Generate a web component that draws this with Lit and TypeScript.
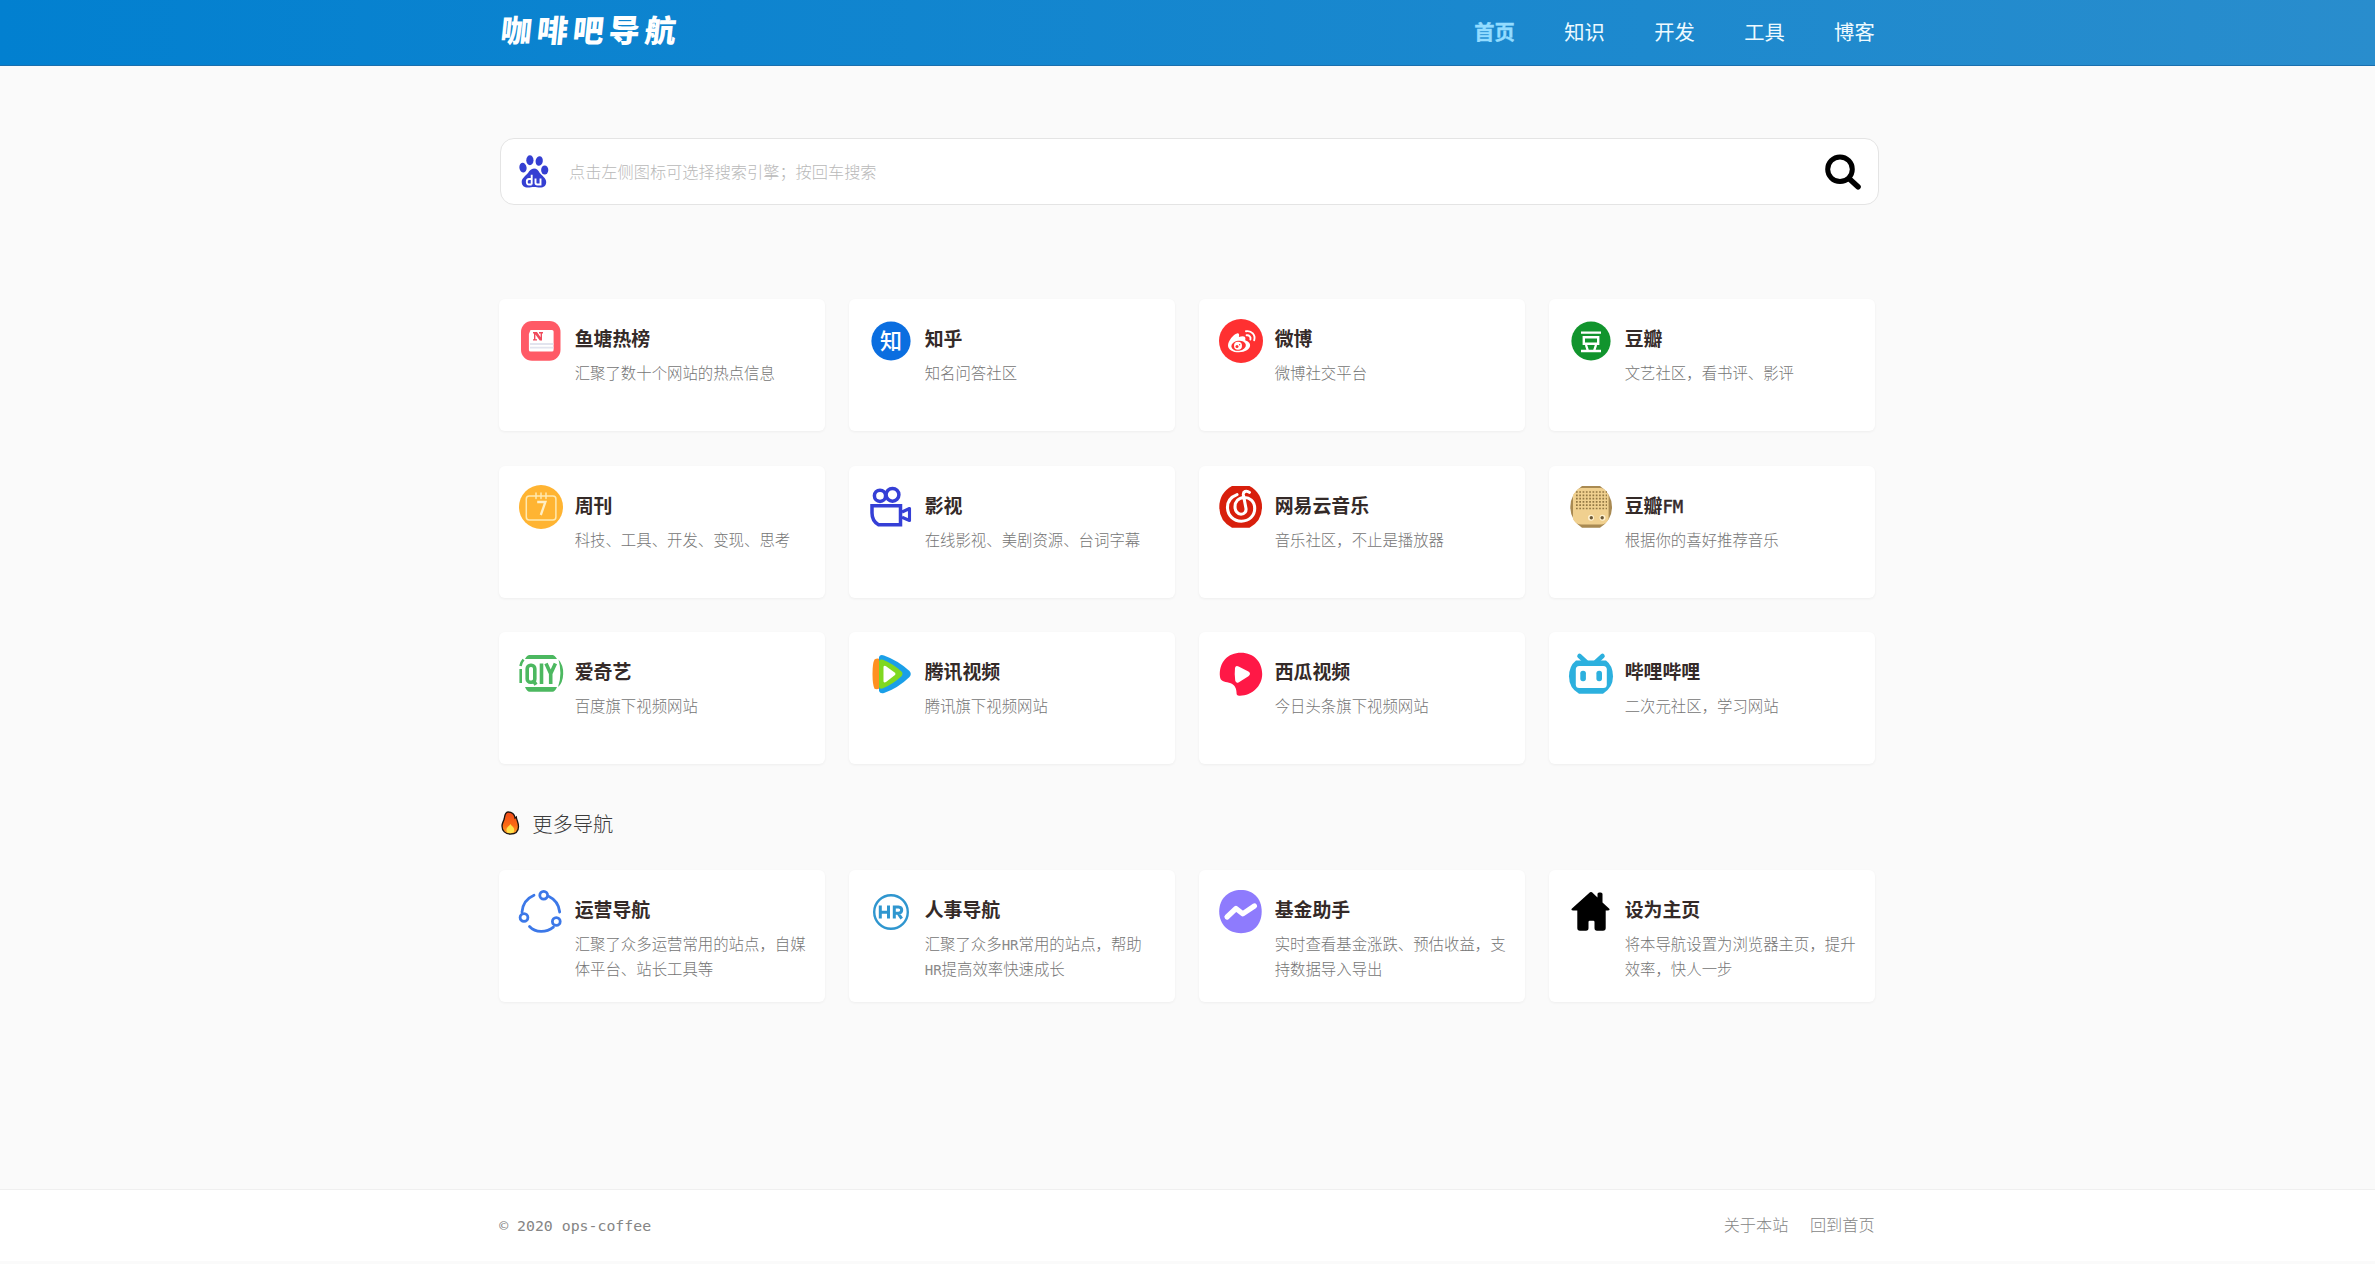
import { LitElement, html, css, svg, TemplateResult, SVGTemplateResult } from "lit";
import { customElement, property } from "lit/decorators.js";

interface Site {
  icon: string;
  name: string;
  latin?: string;
  desc: (string | { en: string })[];
}

const ICONS: Record<string, SVGTemplateResult> = {
  fish: svg`<rect x="2" y="2" width="39.5" height="39.8" rx="11" fill="#ff5a66"/>
    <path d="M11.5 11H33a1.6 1.6 0 0 1 1.6 1.6V31a1.6 1.6 0 0 1-1.6 1.6H11.5A1.6 1.6 0 0 1 9.9 31V15z" fill="#fff"/>
    <path d="M11 25h23.4M11 28.6h23.4" stroke="#e2e4ee" stroke-width="1.8"/>
    <path d="M14 13h4l3.6 5.2V14.4H20V13h4v1.4h-1v7.2h-2.2l-4.4-6v4.6H18v1.4h-4v-1.4h1v-5.8h-1z" fill="#f04a5c"/>`,
  zhihu: svg`<circle cx="22" cy="22" r="19.6" fill="#0a6ee0"/>
    <text x="22" y="30" text-anchor="middle" font-size="22" font-weight="500" fill="#fff">知</text>`,
  weibo: svg`<circle cx="22" cy="22" r="22" fill="#ff3031"/>
    <path d="M18 14.4c2-.4 2.600 1 1.900 3.600 3.500-1.400 6.600-1.200 6.500 1.600 0 .8-.3 1.400-.1 1.700.4.5 4.800 1.300 4.800 5 0 3.900-5 7-11.200 7-6.100 0-10.900-2.800-10.900-6.900 0-4.500 5.500-11.200 9-12z" fill="#fff"/>
    <ellipse cx="19.600" cy="26.700" rx="7.300" ry="5" fill="#ff3031" transform="rotate(-8 19.600 26.700)"/>
    <circle cx="19" cy="26.800" r="4" fill="#fff"/><circle cx="18" cy="27.600" r="1.500" fill="#ff3031"/>
    <circle cx="20.600" cy="25.800" r=".7" fill="#ff3031"/>
    <path d="M27 12.300c5.500-1 9.800 3.700 8.200 9M27.600 16.300c2.700-.4 4.500 1.800 3.800 4.200" fill="none" stroke="#fff" stroke-width="1.900" stroke-linecap="round"/>`,
  douban: svg`<circle cx="22" cy="22" r="19.6" fill="#11942d"/>
    <path d="M12 13.600h20M14.800 18.200h14.400v6.600H14.800zM17 26l1.800 5.500M27 26l-1.800 5.500M12 32h20" fill="none" stroke="#fff" stroke-width="2.400"/>`,
  weekly: svg`<circle cx="22" cy="22" r="22" fill="#ffb432"/>
    <g fill="none" stroke="#ffe9b0" stroke-width="1.500"><rect x="7.300" y="11" width="29.600" height="24" rx="3"/>
    <path d="M17 8v5.500M22 8v5.500M27 8v5.500" stroke-linecap="round"/></g>
    <path d="M18.200 17h8.200l-4.600 13" fill="none" stroke="#ffefc6" stroke-width="2.300"/>`,
  film: svg`<g fill="none" stroke="#353fd6" stroke-width="3.500">
    <circle cx="11" cy="10.800" r="5.600"/><circle cx="23.500" cy="9.800" r="6.400"/>
    <path d="M3 20.700h28.500v19H9.500C5.500 37.500 3 33 3 28z"/>
    <path d="M33 27l7.500-3.500v12L33 32.300" stroke-width="3.100" stroke-linejoin="round"/></g>`,
  netease: svg`<path d="M13 1h17.500Q43 8 43 22T30.500 42.700H13Q.3 36 .3 22T13 1z" fill="#d81f0c"/>
    <path d="M18 9.600C11.500 12 8.300 17 8.500 23c.3 7.500 6 13.200 13.800 13.200 8 0 13.400-5.600 13.400-12.700 0-7.300-5.400-11.200-10.700-11-5.600.2-9 4.200-9 9.200 0 4.300 2.600 7.500 6 7.500 3.600 0 5.600-2.900 4.900-6.200L24.400 10c-.5-3.400 3-5 6-2.600" fill="none" stroke="#fff" stroke-width="3.100" stroke-linecap="round"/>`,
  fm: svg`<path d="M13 1h18Q43 9 43 22T31 42.700H13Q1.300 35 1.300 22T13 1z" fill="#a98a52"/>
    <path d="M12 3h20q3 0 5 3l2.600 4v24q-2 5-7 5.500H12q-6-.5-8-5.500V10l3-4q2-3 5-3z" fill="#f0d08f"/>
    <path d="M7 7h31M7 10.300h31M7 13.600h31M7 16.900h31M7 20.200h31M7 23.500h31" stroke="#927743" stroke-width="1.700" stroke-dasharray="1.700 1.600"/>
    <circle cx="22" cy="32.700" r="3" fill="#fff1cf"/><circle cx="33.500" cy="32.700" r="3" fill="#fff1cf"/>
    <circle cx="22.300" cy="32.700" r="1.700" fill="#6b5836"/><circle cx="33.200" cy="32.700" r="1.700" fill="#6b5836"/>`,
  iqiyi: svg`<g fill="#4cb860"><path d="M10.500 3h23q2 0 4.500 4H6q2-4 4.500-4zM6 35h32q-2 4.800-4.500 4.800h-23Q8 39.800 6 35z"/></g>
    <path d="M4.500 7.500Q2 10.500 1.500 14M1.700 17v14" fill="none" stroke="#4cb860" stroke-width="2.600"/>
    <path d="M39.500 7.500Q44.500 13 44.200 22T39 35Q41.500 28 41.400 21T39.500 7.500z" fill="#4cb860"/>
    <g fill="none" stroke="#4cb860" stroke-width="3.600"><rect x="8.200" y="13.300" width="7.600" height="17" rx="3.400"/>
    <path d="M14 28l3 4.800M22.500 11.600v20.300M27 11.600l4.700 10.200 4.700-10.200M31.700 20v12"/></g>`,
  tencent: svg`<path d="M5.500 7.500Q8 6 11 7v29q-3 2-5.500.8Q3.500 33 3.500 22t2-14.500z" fill="#ff9021"/>
    <path d="M10 5q1-3 5-1.600 14 5 25.500 15.500 2.500 3 0 6Q29 36 15 41q-4 1-5-2z" fill="#1a9fe8"/>
    <path d="M10 9q1-2.400 4-1.200 10 4 18.500 11.800 2 2.200 0 4.600Q24 32 14 36.300q-3 1-4-1z" fill="#80d820"/>
    <path d="M14.500 14.500q1-1.200 2.500-.2l9 6.500q1 1.200 0 2.200l-9 7q-2 1-2.500-.6z" fill="#fff"/>`,
  xigua: svg`<path d="M1 25C-.5 10 9 .7 22 .7S43.200 10 43.200 22 33 43.700 21 43.700c-3 0-3.500-1-3.500-3.500-.2-5-2.500-8.200-7.500-9.500C5 29.600 1.500 29 1 25z" fill="#ff1846"/>
    <path d="M16 16q.6-3 3.600-1.600l9.800 5.200q3.200 2.200 0 4.600l-9.500 6q-3 1.600-3.700-1.600-.9-6-.2-12.600z" fill="#fff"/>`,
  bili: svg`<path d="M10.500 4l6.500 6M33.500 4L27 10" stroke="#2cb0de" stroke-width="4.600" stroke-linecap="round"/>
    <path d="M7 8.500h30q7 5 7 16T34 41.700H10Q0 36 0 24.500 0 14 7 8.500z" fill="#2cb0de"/>
    <rect x="6.800" y="14" width="31" height="22" rx="3.500" fill="#fff"/>
    <rect x="11.300" y="18.700" width="5.600" height="10.500" rx="2.600" fill="#2cb0de"/><rect x="27.400" y="18.700" width="5.600" height="10.500" rx="2.600" fill="#2cb0de"/>`,
  ops: svg`<g fill="none" stroke="#3c78e8" stroke-width="2.800" stroke-linecap="round">
    <circle cx="24.700" cy="5.200" r="3.900"/><circle cx="5" cy="27.500" r="3.900"/><circle cx="37.300" cy="31.500" r="3.900"/>
    <path d="M15 5.300Q4 10 3 22M30 6.500Q39.500 11 40.700 22M10.500 36.500Q15 41.300 22 41.400T34.400 37.200"/></g>`,
  hr: svg`<circle cx="22" cy="22" r="16.800" fill="none" stroke="#2f96cf" stroke-width="2.400"/>
    <g fill="none" stroke="#2f96cf" stroke-width="3"><path d="M11.300 15.600v13M19.500 15.600v13M11.300 22.200h8.200M25.300 28.600V17h4.200q3.200.2 3.200 3t-3.200 3.200h-4M29 23.200l3.700 5.400"/></g>`,
  fund: svg`<path d="M22 0C34 0 42.700 8 42.700 21.500S34 43.200 22 43.200 .2 35 .2 21.500 10 0 22 0z" fill="#8e7bfd"/>
    <path d="M8 27l9-8.500 6.700 5.300L35.400 16" fill="none" stroke="#fff" stroke-width="5.200" stroke-linecap="round" stroke-linejoin="round"/>`,
  home: svg`<path d="M21 2.300q1-.8 2 0l5.500 5.200V4q0-1.500 1.600-1.500h1.600Q33.500 2.500 33.500 4v8.500l6.800 6.300q.9 1.700-1.300 1.700h-2.300V38q0 2.700-2.700 2.700h-6Q25.500 40.700 25.500 38v-6q0-1.200-1.200-1.200h-3.600q-1.200 0-1.200 1.200v6q0 2.700-2.500 2.700h-6Q8.300 40.700 8.300 38V20.500H4q-2.200 0-1.300-1.700z"/>`,
};

const SITES: Site[] = [
  { icon: "fish", name: "鱼塘热榜", desc: ["汇聚了数十个网站的热点信息"] },
  { icon: "zhihu", name: "知乎", desc: ["知名问答社区"] },
  { icon: "weibo", name: "微博", desc: ["微博社交平台"] },
  { icon: "douban", name: "豆瓣", desc: ["文艺社区，看书评、影评"] },
  { icon: "weekly", name: "周刊", desc: ["科技、工具、开发、变现、思考"] },
  { icon: "film", name: "影视", desc: ["在线影视、美剧资源、台词字幕"] },
  { icon: "netease", name: "网易云音乐", desc: ["音乐社区，不止是播放器"] },
  { icon: "fm", name: "豆瓣", latin: "FM", desc: ["根据你的喜好推荐音乐"] },
  { icon: "iqiyi", name: "爱奇艺", desc: ["百度旗下视频网站"] },
  { icon: "tencent", name: "腾讯视频", desc: ["腾讯旗下视频网站"] },
  { icon: "xigua", name: "西瓜视频", desc: ["今日头条旗下视频网站"] },
  { icon: "bili", name: "哔哩哔哩", desc: ["二次元社区，学习网站"] },
];

const MORE: Site[] = [
  { icon: "ops", name: "运营导航", desc: ["汇聚了众多运营常用的站点，自媒体平台、站长工具等"] },
  { icon: "hr", name: "人事导航", desc: ["汇聚了众多", { en: "HR" }, "常用的站点，帮助", { en: "HR" }, "提高效率快速成长"] },
  { icon: "fund", name: "基金助手", desc: ["实时查看基金涨跌、预估收益，支持数据导入导出"] },
  { icon: "home", name: "设为主页", desc: ["将本导航设置为浏览器主页，提升效率，快人一步"] },
];

@customElement("site-card")
export class SiteCard extends LitElement {
  @property({ attribute: false }) site!: Site;

  static styles = css`
    :host {
      display: flex;
      box-sizing: border-box;
      height: 132px;
      padding: 19.500px 18px 0 19.500px;
      gap: 12px;
      background: #fff;
      border-radius: 6px;
      box-shadow: 0 1px 3px rgba(0, 0, 0, 0.05);
    }
    .icon {
      flex: none;
      width: 44px;
      height: 44px;
      overflow: visible;
    }
    .body {
      flex: 1;
      min-width: 0;
      padding-top: 5.500px;
    }
    .name {
      font-size: 18.900px;
      line-height: 28px;
      height: 28px;
      font-weight: 700;
      color: #342a28;
    }
    .desc {
      margin-top: 8px;
      font-size: 15.400px;
      line-height: 25px;
      font-weight: 300;
      color: #757575;
      width: 231.800px;
    }
    .en {
      font-family: "DejaVu Sans Mono", monospace;
      font-size: 0.913em;
      font-weight: 400;
      line-height: 0;
    }
    .desc .en {
      color: #8a8a8a;
    }
    .name .en {
      -webkit-text-stroke: 0.500px #342a28;
    }
  `;

  render(): TemplateResult {
    const s = this.site;
    return html`
      <svg class="icon" viewBox="0 0 44 44">${ICONS[s.icon]}</svg>
      <div class="body">
        <div class="name">${s.name}${s.latin ? html`<span class="en">${s.latin}</span>` : ""}</div>
        <div class="desc">${s.desc.map((d) => (typeof d === "string" ? d : html`<span class="en">${d.en}</span>`))}</div>
      </div>
    `;
  }
}

@customElement("app-root")
export class AppRoot extends LitElement {
  static styles = css`
    :host {
      display: flex;
      flex-direction: column;
      height: 1264px;
      background: #fafafa;
      font-family: "Noto Sans CJK SC", sans-serif;
      font-weight: 300;
    }
    .wrap {
      width: 1375.500px;
      margin: 0 0 0 499.200px;
    }
    header {
      height: 66px;
      box-sizing: border-box;
      border-bottom: 1px solid #1a6fae;
      background: linear-gradient(90deg, #0280d0, #298dcd);
    }
    header .wrap {
      display: flex;
      justify-content: space-between;
      height: 62px;
      line-height: 62px;
    }
    .logo {
      font-size: 31px;
      line-height: 58px;
      font-weight: 900;
      letter-spacing: 5px;
      color: #fff;
      padding-left: 2px;
      transform: skewX(-6deg);
    }
    nav {
      display: flex;
      gap: 49.400px;
      font-size: 20.300px;
      font-weight: 400;
      color: #eefaff;
    }
    .active {
      font-weight: 700;
      color: #93dcff;
      -webkit-text-stroke: 0.400px #93dcff;
    }
    .search {
      box-sizing: border-box;
      display: flex;
      align-items: center;
      width: 1379.500px;
      height: 67px;
      margin: 72px 0 0 0.800px;
      padding: 0 17px 0 18.500px;
      border: 1px solid #e4e4e4;
      border-radius: 14px;
      background: #fff;
    }
    .paw {
      width: 30px;
      height: 33px;
    }
    .field {
      flex: 1;
      margin-left: 19.500px;
      padding: 0 0 1px;
      border: 0;
      outline: 0;
      background: none;
      font: 300 16.200px "Noto Sans CJK SC", sans-serif;
    }
    .field::placeholder {
      color: #b9b9b9;
    }
    .glass {
      width: 36px;
      height: 36px;
    }
    .grid {
      display: grid;
      grid-template-columns: repeat(4, 325.500px);
      column-gap: 24.500px;
      row-gap: 34.500px;
    }
    .main {
      margin-top: 94px;
    }
    .more {
      display: flex;
      align-items: center;
      gap: 12px;
      height: 30px;
      margin: 44px 0 32px 2px;
      font-size: 20.300px;
      color: #3c3c3c;
    }
    .fire {
      width: 19px;
      height: 24px;
    }
    footer {
      margin-top: auto;
      margin-bottom: 3px;
      height: 71px;
      border-top: 1px solid #efefef;
      background: #fff;
    }
    footer .wrap {
      display: flex;
      align-items: center;
      justify-content: space-between;
      height: 70px;
      color: #858585;
    }
    .copy {
      font: 14.850px "DejaVu Sans Mono", monospace;
      padding-top: 2px;
    }
    .links {
      display: flex;
      gap: 21.500px;
      font-size: 16.200px;
      padding-bottom: 3px;
    }
  `;

  render(): TemplateResult {
    return html`
      <header>
        <div class="wrap">
          <div class="logo">咖啡吧导航</div>
          <nav>
            <span class="active">首页</span><span>知识</span><span>开发</span><span>工具</span><span>博客</span>
          </nav>
        </div>
      </header>
      <div class="wrap">
        <div class="search">
          <svg class="paw" viewBox="0 0 30 33">
            <g fill="#353fd2">
              <ellipse cx="10.900" cy="5.300" rx="3.600" ry="5"/>
              <ellipse cx="20.200" cy="6" rx="3.600" ry="4.800" transform="rotate(10 20.200 6)"/>
              <ellipse cx="4" cy="12.700" rx="3.600" ry="4.900" transform="rotate(-8 4 12.700)"/>
              <ellipse cx="25.700" cy="15" rx="3.600" ry="4.600"/>
              <path d="M15 13.500c3 0 4.200 2 5.600 4.200 2 2.800 6.600 5.300 6.600 9.300 0 3.800-2.700 5.700-6.200 5.600-2.300 0-3.700-.6-6-.6s-3.700.6-6 .6c-3.700 0-6.300-2-6.300-5.600 0-4 4-6 6.300-9 1.600-2.200 3-4.500 6-4.500z"/>
            </g>
            <path d="M12.700 19.800v9.800M12.700 24H10q-2.200 0-2.200 2.800T10 29.500h2.700M16.500 23.500v4.300q0 1.700 1.700 1.700h3.300v-6" fill="none" stroke="#fff" stroke-width="1.900"/>
          </svg>
          <input class="field" placeholder="点击左侧图标可选择搜索引擎；按回车搜索" />
          <svg class="glass" viewBox="0 0 36 36" fill="none" stroke="#000" stroke-linecap="round">
            <circle cx="15" cy="15.300" r="12.300" stroke-width="5"/>
            <path d="M24.800 25.300l8.200 7.500" stroke-width="5.600"/>
          </svg>
        </div>
        <div class="grid main">${SITES.map((s) => html`<site-card .site=${s}></site-card>`)}</div>
        <div class="more">
          <svg class="fire" viewBox="0 0 19 24">
            <defs>
              <linearGradient id="flame" x1="0" y1="0" x2="0" y2="1">
                <stop offset="0" stop-color="#f04a1a"/><stop offset=".6" stop-color="#fb6a14"/><stop offset="1" stop-color="#ffa62b"/>
              </linearGradient>
            </defs>
            <path d="M7 1c4 0 6.500 2.500 7 6l1.300-1C15.500 9 17.500 11.500 17.500 15.500 17.500 20.500 14 23 9.200 23S1 20 1 15c0-3 1.800-5 2.300-7.500C3.800 4.500 4 1.200 7 1z" fill="url(#flame)" stroke="#1c1410" stroke-width="1.300"/>
            <path d="M9.300 13c1.500 2 3.900 3.200 3.900 5.800s-1.700 3.500-3.900 3.500-3.900-.9-3.900-3.500c0-2.300 3-3.500 3.900-5.800z" fill="#ffe14a"/>
          </svg>
          <span>更多导航</span>
        </div>
        <div class="grid">${MORE.map((s) => html`<site-card .site=${s}></site-card>`)}</div>
      </div>
      <footer>
        <div class="wrap">
          <span class="copy">© 2020 ops-coffee</span>
          <div class="links"><span>关于本站</span><span>回到首页</span></div>
        </div>
      </footer>
    `;
  }
}
